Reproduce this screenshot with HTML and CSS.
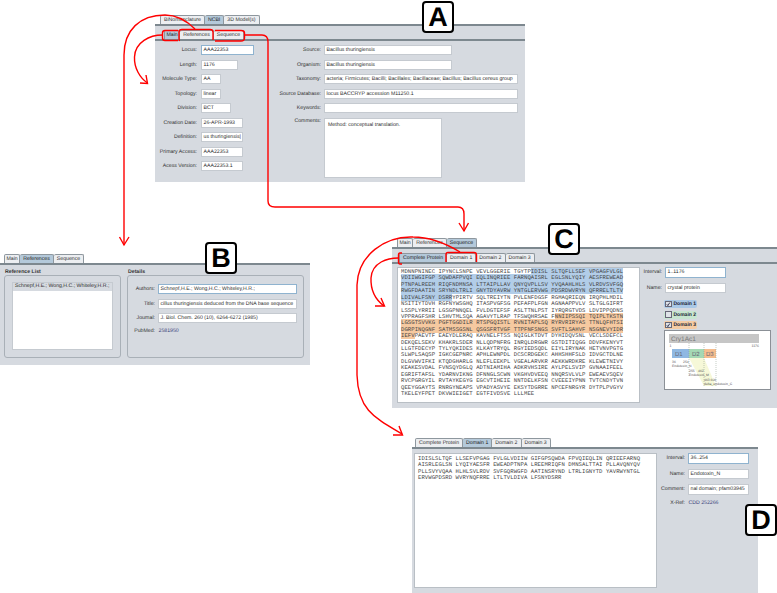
FILE: index.html
```html
<!DOCTYPE html>
<html lang="en">
<head>
	<meta charset="utf-8">
	<title>Protein record viewer panels</title>
	<link rel="stylesheet" href="styles.css">
</head>
<body>
<div class="canvas">

	<!-- A: record, main tab -->
	<section class="window win-a">
		<div class="tabs">
			<span class="tab">BiNomenclature</span>
			<span class="tab on">NCBI</span>
			<span class="tab">3D Model(s)</span>
		</div>
		<div class="body">
			<div class="tabs subtabs">
				<span class="tab tight on">Main</span>
				<span class="tab">References</span>
				<span class="tab">Sequence</span>
			</div>
			<div class="main-form">
				<div class="fields fields-left">
					<label>Locus:</label><div class="field focus w53">AAA22353</div>
					<label>Length:</label><div class="field w37">1176</div>
					<label>Molecule Type:</label><div class="field w20">AA</div>
					<label>Topology:</label><div class="field w20">linear</div>
					<label>Division:</label><div class="field w30">BCT</div>
					<label>Creation Date:</label><div class="field w42">26-APR-1993</div>
					<label>Definition:</label><div class="field w42">us thuringiensis|</div>
					<label>Primary Access:</label><div class="field w42">AAA22353</div>
					<label>Acess Version:</label><div class="field w42">AAA22353.1</div>
				</div>
				<div class="fields fields-right">
					<label>Source:</label><div class="field w128">Bacillus thuringiensis</div>
					<label>Organism:</label><div class="field w128">Bacillus thuringiensis</div>
					<label>Taxonomy:</label><div class="field w194">acteria; Firmicutes; Bacilli; Bacillales; Bacillaceae; Bacillus; Bacillus cereus group</div>
					<label>Source Database:</label><div class="field w194">locus BACCRYP accession M11250.1</div>
					<label>Keywords:</label><div class="field w194"></div>
					<label class="top">Comments:</label><div class="field area">Method: conceptual translation.</div>
				</div>
			</div>
		</div>
	</section>

	<!-- B: record, references tab -->
	<section class="window win-b">
		<div class="tabs">
			<span class="tab tight">Main</span>
			<span class="tab on">References</span>
			<span class="tab">Sequence</span>
		</div>
		<div class="body refs">
			<div class="group group-list">
				<h4>Reference List</h4>
				<div class="group-box">
					<ul class="ref-list">
						<li>Schnepf,H.E.; Wong,H.C.; Whiteley,H.R.;</li>
					</ul>
				</div>
			</div>
			<div class="group group-details">
				<h4>Details</h4>
				<div class="group-box">
					<div class="fields fields-refs">
						<label>Authors:</label><div class="field focus">Schnepf,H.E.; Wong,H.C.; Whiteley,H.R.;</div>
						<label>Title:</label><div class="field">cillus thuringiensis deduced from the DNA base sequence</div>
						<label>Journal:</label><div class="field">J. Biol. Chem. 260 (10), 6264-6272 (1985)</div>
						<label>PubMed:</label><div class="link">2581950</div>
					</div>
				</div>
			</div>
		</div>
	</section>

	<!-- C: sequence tab, whole protein -->
	<section class="window win-c">
		<div class="tabs">
			<span class="tab tight">Main</span>
			<span class="tab">References</span>
			<span class="tab on">Sequence</span>
		</div>
		<div class="body">
			<div class="tabs subtabs">
				<span class="tab on">Complete Protein</span>
				<span class="tab">Domain 1</span>
				<span class="tab">Domain 2</span>
				<span class="tab">Domain 3</span>
			</div>
			<div class="seq-pane">
<pre class="seq seq-c">MDNNPNINEC IPYNCLSNPE VEVLGGERIE TGYTP<span class="hl-blue">IDISL SLTQFLLSEF VPGAGFVLGL</span>
<span class="hl-blue">VDIIWGIFGP SQWDAFPVQI EQLINQRIEE FARNQAISRL EGLSNLYQIY AESFREWEAD</span>
<span class="hl-blue">PTNPALREEM RIQFNDMNSA LTTAIPLLAV QNYQVPLLSV YVQAAHLHLS VLRDVSVFGQ</span>
<span class="hl-blue">RWGFDAATIN SRYNDLTRLI GNYTDYAVRW YNTGLERVWG PDSRDWVRYN QFRRELTLTV</span>
<span class="hl-blue">LDIVALFSNY DSRR</span>YPIRTV SQLTREIYTN PVLENFDGSF RGMAQRIEQN IRQPHLMDIL
NSITIYTDVH RGFNYWSGHQ ITASPVGFSG PEFAFPLFGN AGNAAPPVLV SLTGLGIFRT
LSSPLYRRII LGSGPNNQEL FVLDGTEFSF ASLTTNLPST IYRQRGTVDS LDVIPPQDNS
VPPRAGFSHR LSHVTMLSQA AGAVYTLRAP TFSWQHRSAE F<span class="hl-orange">NNIIPSSQI TQIPLTKSTN</span>
<span class="hl-orange">LGSGTSVVKG PGFTGGDILR RTSPGQISTL RVNITAPLSQ RYRVRIRYAS TTNLQFHTSI</span>
<span class="hl-orange">DGRPINQGNF SATMSSGSNL QSGSFRTVGF TTPFNFSNGS SVFTLSAHVF NSGNEVYIDR</span>
<span class="hl-orange">IEFV</span>PAEVTF EAEYDLERAQ KAVNELFTSS NQIGLKTDVT DYHIDQVSNL VECLSDEFCL
DEKQELSEKV KHAKRLSDER NLLQDPNFRG INRQLDRGWR GSTDITIQGG DDVFKENYVT
LLGTFDECYP TYLYQKIDES KLKAYTRYQL RGYIEDSQDL EIYLIRYNAK HETVNVPGTG
SLWPLSAQSP IGKCGEPNRC APHLEWNPDL DCSCRDGEKC AHHSHHFSLD IDVGCTDLNE
DLGVWVIFKI KTQDGHARLG NLEFLEEKPL VGEALARVKR AEKKWRDKRE KLEWETNIVY
KEAKESVDAL FVNSQYDGLQ ADTNIAMIHA ADKRVHSIRE AYLPELSVIP GVNAAIFEEL
EGRIFTAFSL YDARNVIKNG DFNNGLSCWN VKGHVDVEEQ NNQRSVLVLP EWEAEVSQEV
RVCPGRGYIL RVTAYKEGYG EGCVTIHEIE NNTDELKFSN CVEEEIYPNN TVTCNDYTVN
QEEYGGAYTS RNRGYNEAPS VPADYASVYE EKSYTDGRRE NPCEFNRGYR DYTPLPVGYV
TKELEYFPET DKVWIEIGET EGTFIVDSVE LLLMEE</pre>
				<div class="seq-side side-c">
					<div class="fields fields-seq">
						<label>Interval:</label><div class="field focus">1..1176</div>
						<label>Name:</label><div class="field">crystal protein</div>
					</div>
					<div class="domains">
						<div class="domain d-blue"><span class="check"><svg viewBox="0 0 8 8"><path d="M1.5 4 L3.3 6.4 L6.8 1"/></svg></span>Domain 1</div>
						<div class="domain d-green"><span class="check"></span>Domain 2</div>
						<div class="domain d-orange"><span class="check"><svg viewBox="0 0 8 8"><path d="M1.5 4 L3.3 6.4 L6.8 1"/></svg></span>Domain 3</div>
					</div>
					<div class="map">
						<svg viewBox="0 -1 105 57" width="105" height="57">
							<rect x="4" y="2" width="90" height="9" fill="#c6c6c6"/>
							<text x="6" y="9" class="map-title">Cry1Ac1</text>
							<text x="4.5" y="14.5" class="map-tick">1</text>
							<text x="94" y="14.5" class="map-tick" text-anchor="end">1176</text>
							<polygon points="24,26 39,26 51,54 39,54" fill="#f6f8d8"/>
							<rect x="7" y="17" width="17" height="9" fill="#8fb8e2"/>
							<rect x="24" y="17" width="15" height="9" fill="#a4d8b4"/>
							<rect x="39" y="17" width="12" height="9" fill="#f5bd8e"/>
							<text x="10" y="24" class="map-dom">D1</text>
							<text x="27" y="24" class="map-dom">D2</text>
							<text x="41" y="24" class="map-dom">D3</text>
							<path d="M24 11 V44 M39 11 V54 M51 11 V54" class="map-guide"/>
							<text x="7" y="31" class="map-note">36</text>
							<text x="18" y="31" class="map-note">254</text>
							<text x="7" y="35" class="map-note">Endotoxin_N</text>
							<text x="24" y="39.5" class="map-note">255</text>
							<text x="33" y="39.5" class="map-note">462</text>
							<text x="24" y="44" class="map-note">Endotoxin_M</text>
							<text x="39" y="48.5" class="map-note">463 606</text>
							<text x="39" y="53" class="map-note">delta_endotoxin_C</text>
						</svg>
					</div>
				</div>
			</div>
		</div>
	</section>

	<!-- D: sequence tab, first domain -->
	<section class="window win-d">
		<div class="tabs">
			<span class="tab">Complete Protein</span>
			<span class="tab on">Domain 1</span>
			<span class="tab">Domain 2</span>
			<span class="tab">Domain 3</span>
		</div>
		<div class="body">
			<div class="seq-pane">
<pre class="seq seq-d">IDISLSLTQF LLSEFVPGAG FVLGLVDIIW GIFGPSQWDA FPVQIEQLIN QRIEEFARNQ
AISRLEGLSN LYQIYAESFR EWEADPTNPA LREEMRIQFN DMNSALTTAI PLLAVQNYQV
PLLSVYVQAA HLHLSVLRDV SVFGQRWGFD AATINSRYND LTRLIGNYTD YAVRWYNTGL
ERVWGPDSRD WVRYNQFRRE LTLTVLDIVA LFSNYDSRR</pre>
				<div class="seq-side side-d">
					<div class="fields fields-seq">
						<label>Interval:</label><div class="field focus">36..254</div>
						<label>Name:</label><div class="field">Endotoxin_N</div>
						<label>Comment:</label><div class="field">nal domain; pfam03945</div>
						<label>X-Ref:</label><div class="link">CDD 252266</div>
					</div>
				</div>
			</div>
		</div>
	</section>

	<!-- red callouts between the panels -->
	<svg class="callouts" viewBox="0 0 777 593" width="777" height="593">
		<path d="M178 30.5 H165 Q162.5 30.5 162.5 33 V38 Q162.5 40.5 165 40.5 H178"/>
		<path d="M180 40.5 Q179 40.5 179 38 V32 Q179 29.5 182 29.5 H210 Q213 29.5 213 32 V40"/>
		<path d="M215 30.5 H241 Q244.5 30.5 244.5 33 V38 Q244.5 41 241 41 H215"/>

		<!-- Main to the form below -->
		<path d="M162.5 35 C150 35 135 42 134.5 57 C134 68 140 78 147.5 83"/>
		<path d="M140 83 L147.5 83.5 L146 75"/>

		<!-- References to panel B -->
		<path d="M195 29 C188 22 178 15 165 15 C140 15 124 30 124 55 V245"/>
		<path d="M119.5 237 L124 245 L129 237"/>

		<!-- Sequence to panel C -->
		<path d="M244.5 35 H262 Q268 35 268 42 V201 Q268 207 275 207 H458 Q464 207 464 214 V231"/>
		<path d="M459 223 L464 231 L468.5 223"/>

		<!-- Complete Protein and Domain 1 brackets -->
		<path d="M402 253 H400 Q398.5 253 398.5 255 V262 Q398.5 264 400 264 H402"/>
		<path d="M446 262 V254.5 Q446 252.5 448 252.5 H474 Q476.5 252.5 476.5 255 V262"/>
		<path d="M398.5 258 C388 258 372 262 371 278 C370.5 290 376 300 384 306"/>
		<path d="M375 306 L384.5 306 L381 298"/>
		<path d="M460 252 C445 243 430 237 413 237 C385 236 358 255 357 285 V375 C358 410 375 418 402 434"/>
		<path d="M393 435 L402.5 435 L399 426"/>
	</svg>

	<div class="badge badge-a">A</div>
	<div class="badge badge-b">B</div>
	<div class="badge badge-c">C</div>
	<div class="badge badge-d">D</div>
</div>
</body>
</html>
```

FILE: styles.css
```css
* {
	box-sizing: border-box;
}
body {
	margin: 0;
	background-color: white;
	font-family: "Liberation Sans", Arial, sans-serif;
	font-size: 5.2px;
	text-rendering: geometricPrecision;
	color: #2b2b2b;
}
.canvas {
	position: relative;
	width: 777px;
	height: 593px;
	overflow: hidden;
}

/* the four windows sit freely on the canvas */
.window {
	position: absolute;
	display: flex;
	flex-direction: column;
}
.win-a {
	left: 155px;
	top: 15px;
	width: 370px;
	height: 167px;
}
.win-b {
	left: 0;
	top: 254px;
	width: 310px;
	height: 111px;
}
.win-c {
	left: 392px;
	top: 238px;
	width: 385px;
	height: 170px;
}
.win-d {
	left: 412px;
	top: 438px;
	width: 346px;
	height: 155px;
}
.win-a > .tabs { padding-left: 5px; }
.win-b > .tabs { padding-left: 4px; }
.win-c > .tabs { padding-left: 5px; }
.win-d > .tabs { padding-left: 3px; }

.body {
	flex: 1;
	min-height: 0;
	background-color: #d6dae0;
	border-top: 2px solid #7d888f;
}

.tabs {
	display: flex;
	height: 9px;
	flex: none;
}
.tab {
	display: flex;
	align-items: center;
	padding: 0 3px;
	background-color: #eceef1;
	border: 1px solid #8e979e;
	border-bottom: none;
	border-left-width: 0;
	border-radius: 2px 2px 0 0;
	white-space: nowrap;
	color: #333;
}
.tab:first-child {
	border-left-width: 1px;
}
.tab.tight {
	padding: 0 1.5px;
}
.tab.on {
	background-color: #b4c9da;
	color: #222;
}

.subtabs {
	box-sizing: content-box;
	margin-top: 4px;
	padding-left: 9px;
	border-bottom: 2px solid #7d888f;
}
.win-c .subtabs {
	padding-left: 7px;
}

/* label and value pairs */
.fields {
	display: grid;
	align-items: center;
	justify-items: start;
}
.fields label {
	justify-self: end;
	white-space: nowrap;
	color: #333;
}
.fields label.top {
	align-self: start;
}
.field {
	width: 100%;
	height: 10px;
	line-height: 8px;
	padding: 0 1.5px;
	background-color: white;
	border: 1px solid #c5cad0;
	white-space: nowrap;
	overflow: hidden;
	color: #2b2b2b;
}
.field.focus {
	border-color: #8fb3cf;
}
.link {
	color: #3a3f7a;
}

.main-form {
	display: flex;
	padding-top: 4px;
}
.fields-left {
	flex: none;
	grid-template-columns: 42px auto;
	column-gap: 4px;
	row-gap: 4.5px;
	align-self: start;
	width: 124px;
}
.fields-right {
	flex: none;
	grid-template-columns: 42px 194px;
	grid-auto-rows: min-content;
	column-gap: 3px;
	row-gap: 4.5px;
	align-self: start;
}
.w20 { width: 20px; }
.w30 { width: 30px; }
.w37 { width: 37px; }
.w42 { width: 42px; }
.w53 { width: 53px; }
.w128 { width: 128px; }
.w194 { width: 194px; }
.field.area {
	width: 118px;
	height: 60px;
	padding: 3px;
	line-height: 7px;
	white-space: normal;
}

/* references tab */
.refs {
	display: flex;
	gap: 6px;
	padding: 4px 6px 7px 4px;
}
.group {
	display: flex;
	flex-direction: column;
}
.group-list {
	flex: none;
	width: 117px;
}
.group-details {
	flex: 1;
}
.group h4 {
	margin: 0 0 0 1px;
	font-size: 5.2px;
	line-height: 6px;
	font-weight: bold;
	color: #333;
}
.group-box {
	flex: 1;
	border: 1px solid #a9b0b7;
	border-radius: 3px;
}
.ref-list {
	list-style: none;
	margin: 6px 7px;
	padding: 0;
	height: 68px;
	background-color: white;
	border: 1px solid #c5cad0;
}
.ref-list li {
	height: 8px;
	line-height: 7px;
	padding: 0 2px;
	white-space: nowrap;
	background-color: #d6dae0;
}
.fields-refs {
	grid-template-columns: 27px 139px;
	column-gap: 3px;
	row-gap: 4.5px;
	padding-top: 8px;
}
.fields-refs .link {
	padding-left: 0.5px;
}

/* sequence tabs */
.seq-pane {
	display: flex;
	padding-top: 3px;
}
.seq {
	flex: none;
	width: 243px;
	margin: 0;
	background-color: white;
	border: 1px solid #b9bfc5;
	font-family: "Liberation Mono", "Courier New", monospace;
	font-size: 5.6px;
	letter-spacing: 0.06px;
	line-height: 6.42px;
	color: #444;
	padding: 1px 0 0 3px;
}
.seq-c {
	height: 136px;
	margin-left: 5px;
}
.seq-d {
	height: 135px;
	margin: 1px 0 0 2px;
	padding-top: 2px;
}
.hl-blue { background-color: #b2cde8; }
.hl-orange { background-color: #f6c9a0; }

.seq-side {
	display: flex;
	flex-direction: column;
}
.side-c {
	width: 137px;
}
.side-d {
	width: 101px;
	padding-top: 1px;
}
.fields-seq {
	grid-template-columns: 22px 61px;
	column-gap: 3px;
	row-gap: 5px;
}
.fields-seq .field {
	height: 10.5px;
	line-height: 8.5px;
}
.fields-seq .link {
	padding-left: 0.5px;
}
.side-d .fields-seq {
	grid-template-columns: 25px 61px;
	margin-left: 3px;
}

.domains {
	display: flex;
	flex-direction: column;
	gap: 2.5px;
	margin: 7px 0 0 24px;
}
.domain {
	display: flex;
	align-items: center;
	gap: 2px;
	width: 33px;
	height: 8px;
	font-weight: bold;
	font-size: 5px;
	white-space: nowrap;
	color: #223;
	border-radius: 2px;
}
.d-blue { background-color: #a9c8e6; }
.d-green { background-color: #c7e6d0; }
.d-orange { background-color: #f5cca4; }
.check {
	display: block;
	width: 6.5px;
	height: 6.5px;
	margin-left: 1px;
	background-color: #dfe3e8;
	border: 1px solid #667;
	flex: none;
}
.check svg {
	display: block;
	width: 100%;
	height: 100%;
}
.check path {
	fill: none;
	stroke: #113;
	stroke-width: 1.4;
}

/* domain map under the check boxes */
.map {
	width: 107px;
	height: 60px;
	margin: 1px 0 0 24px;
	background-color: white;
	border: 1.5px solid #8b9096;
}
.map svg {
	display: block;
}
.map-title {
	font-size: 6.5px;
	fill: #777;
}
.map-tick {
	font-size: 3.5px;
	fill: #666;
}
.map-dom {
	font-size: 6px;
	fill: #667;
}
.map-note {
	font-size: 3.4px;
	fill: #555;
}
.map-guide {
	fill: none;
	stroke: #8a9a8a;
	stroke-width: 0.5;
	stroke-dasharray: 1 1;
}

/* overlays */
.callouts {
	position: absolute;
	left: 0;
	top: 0;
	pointer-events: none;
}
.callouts path {
	fill: none;
	stroke: #f00;
	stroke-width: 1.4;
}
.badge {
	position: absolute;
	width: 32px;
	height: 32px;
	background-color: white;
	border: 2px solid black;
	border-radius: 4px;
	font-size: 27px;
	font-weight: bold;
	line-height: 28px;
	text-align: center;
	color: black;
}
.badge-a { left: 422px; top: 1px; }
.badge-b { left: 205px; top: 242px; }
.badge-c { left: 548px; top: 223px; }
.badge-d { left: 745px; top: 504px; }
```
